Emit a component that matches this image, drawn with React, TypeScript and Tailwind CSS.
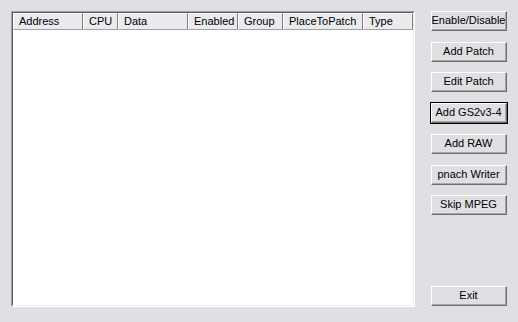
import React from 'react'

const columns = [
  { label: 'Address', w: 'w-[70px]' },
  { label: 'CPU', w: 'w-[35px]' },
  { label: 'Data', w: 'w-[70px]' },
  { label: 'Enabled', w: 'w-[50px]' },
  { label: 'Group', w: 'w-[45px]' },
  { label: 'PlaceToPatch', w: 'w-[80px]' },
  { label: 'Type', w: 'w-[50px]' },
]

const buttons = [
  { label: 'Enable/Disable', mt: '' },
  { label: 'Add Patch', mt: 'mt-[9px]' },
  { label: 'Edit Patch', mt: 'mt-[8px]' },
  { label: 'Add GS2v3-4', mt: 'mt-[9px]', active: true },
  { label: 'Add RAW', mt: 'mt-[9px]' },
  { label: 'pnach Writer', mt: 'mt-[9px]' },
  { label: 'Skip MPEG', mt: 'mt-[8px]' },
]

function Button({ label, active, className = '' }: { label: string; active?: boolean; className?: string }) {
  return (
    <div className={`${active ? 'border border-black' : 'border border-transparent'} ${className}`}>
      <div className="h-[20px] border-t border-l border-t-white border-l-white border-b border-r border-b-[#6d6d6d] border-r-[#6d6d6d]">
        <div className="h-full flex items-center justify-center border-b border-r border-b-[#a8a7ab] border-r-[#a8a7ab] bg-[#e0dfe3] text-[11px] text-black">
          {label}
        </div>
      </div>
    </div>
  )
}

export default function App() {
  return (
    <div
      className="w-[518px] h-[322px] bg-[#e0dfe3] flex items-start pt-[10px] pl-[11px]"
      style={{ fontFamily: '"Liberation Sans", Arial, sans-serif' }}
    >
      {/* List view */}
      <div className="mt-[1px] w-[404px] h-[296px] border-t border-l border-t-[#a0a0a0] border-l-[#a0a0a0] border-b border-r border-b-white border-r-white">
        <div className="h-full border-t border-l border-t-[#5e5e5e] border-l-[#5e5e5e] border-b border-r border-b-[#f1efe2] border-r-[#f1efe2] bg-white flex flex-col">
          <div className="flex h-[17px]">
            {columns.map((c) => (
              <div
                key={c.label}
                className={`${c.w} h-full bg-[#ebeaef] border-t border-l border-t-white border-l-white border-b border-r border-b-[#a0a0a0] border-r-[#808080] text-[11px] text-black leading-[15px] pl-[5px] whitespace-nowrap overflow-hidden`}
              >
                {c.label}
              </div>
            ))}
          </div>
        </div>
      </div>

      {/* Buttons */}
      <div className="ml-[15px] w-[78px] h-[297px] flex flex-col">
        {buttons.map((b) => (
          <Button key={b.label} label={b.label} active={b.active} className={b.mt} />
        ))}
        <Button label="Exit" className="mt-auto" />
      </div>
    </div>
  )
}
